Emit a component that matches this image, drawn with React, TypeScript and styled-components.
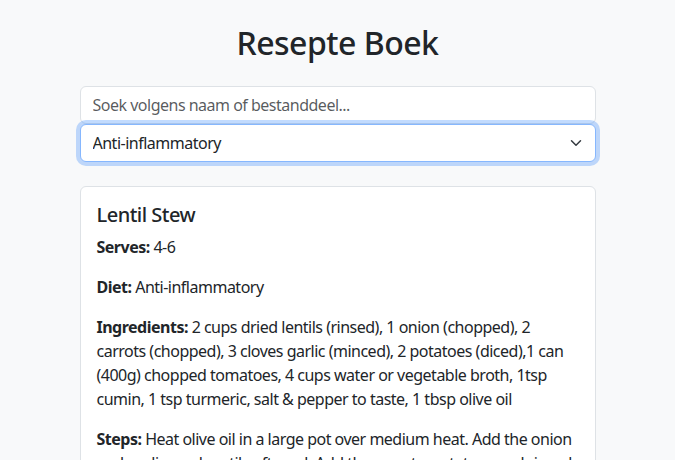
import React, {useState} from 'react';
import styled, {createGlobalStyle} from 'styled-components';

const GlobalStyle = createGlobalStyle`
  * { box-sizing: border-box; }
  body {
    margin: 0;
    background: #f8f9fa;
    color: #212529;
    font-family: "Segoe UI", "Noto Sans", sans-serif;
    font-size: 16px;
    line-height: 1.5;
    letter-spacing: -0.5px;
  }
`;

const Container = styled.div`
  max-width: 540px;
  margin: 0 auto;
  padding: 24px 12px 0;
`;

const Heading = styled.h1`
  margin: 0 0 24px;
  text-align: center;
  font-size: 32px;
  font-weight: 500;
  line-height: 1.2;
`;

const Field = styled.input`
  display: block;
  width: 100%;
  height: 38px;
  padding: 6px 12px;
  font: inherit;
  letter-spacing: inherit;
  color: #212529;
  background: #fff;
  border: 1px solid #dee2e6;
  border-radius: 6px;
  outline: none;
  &::placeholder { color: rgba(33, 37, 41, 0.75); }
`;

const SelectWrap = styled.div`
  position: relative;
  margin-bottom: 24px;
`;

const Select = styled.select`
  display: block;
  width: 100%;
  height: 38px;
  padding: 6px 36px 6px 12px;
  font: inherit;
  letter-spacing: inherit;
  color: #212529;
  background: #fff;
  appearance: none;
  border: 1px solid #86b7fe;
  border-radius: 6px;
  outline: none;
  box-shadow: 0 0 0 4px rgba(13, 110, 253, 0.25);
`;

const Chevron = styled.svg`
  position: absolute;
  right: 12px;
  top: 13px;
  pointer-events: none;
`;

const Card = styled.div`
  background: #fff;
  border: 1px solid #dee2e6;
  border-radius: 6px;
  padding: 16px;
  margin-bottom: 24px;
`;

const CardTitle = styled.h5`
  margin: 0 0 8px;
  font-size: 20px;
  font-weight: 500;
  line-height: 1.2;
`;

const Para = styled.p`
  margin: 0 0 16px;
`;

const recipe = {
  name: 'Lentil Stew',
  serves: '4-6',
  diet: 'Anti-inflammatory',
  ingredients:
    '2 cups dried lentils (rinsed), 1 onion (chopped), 2 carrots (chopped), 3 cloves garlic (minced), 2 potatoes (diced),1 can (400g) chopped tomatoes, 4 cups water or vegetable broth, 1tsp cumin, 1 tsp turmeric, salt & pepper to taste, 1 tbsp olive oil',
  steps:
    'Heat olive oil in a large pot over medium heat. Add the onion and garlic, cook until softened. Add the carrots, potatoes and rinsed lentils, then stir in the spices. Pour in the tomatoes and broth, bring to a boil and simmer for 30 minutes.',
};

const App = () => {
  const [query, setQuery] = useState('');
  const [diet, setDiet] = useState('Anti-inflammatory');
  return (
    <>
      <GlobalStyle />
      <Container>
        <Heading>Resepte Boek</Heading>
        <Field
          placeholder="Soek volgens naam of bestanddeel..."
          value={query}
          onChange={(e) => setQuery(e.target.value)}
        />
        <SelectWrap>
          <Select value={diet} onChange={(e) => setDiet(e.target.value)}>
            <option>Alle</option>
            <option>Anti-inflammatory</option>
          </Select>
          <Chevron width="16" height="12" viewBox="0 0 16 16">
            <path d="m2 5 6 6 6-6" fill="none" stroke="#343a40" strokeWidth="2" strokeLinecap="round" strokeLinejoin="round" />
          </Chevron>
        </SelectWrap>
        <Card>
          <CardTitle>{recipe.name}</CardTitle>
          <Para><strong>Serves:</strong> {recipe.serves}</Para>
          <Para><strong>Diet:</strong> {recipe.diet}</Para>
          <Para><strong>Ingredients:</strong> {recipe.ingredients}</Para>
          <Para><strong>Steps:</strong> {recipe.steps}</Para>
        </Card>
      </Container>
    </>
  );
};

export default App;
